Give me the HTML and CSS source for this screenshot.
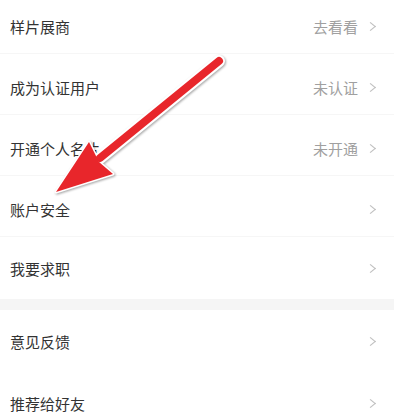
FILE: index.html
```html
<!DOCTYPE html>
<html lang="zh">
<head>
<meta charset="utf-8">
<link rel="stylesheet" href="styles.css">
</head>
<body>
<div class="page">
  <div class="group first">
    <div class="row"><span class="label">样片展商</span><span class="value">去看看</span><span class="chev"></span></div>
    <div class="row"><span class="label">成为认证用户</span><span class="value">未认证</span><span class="chev"></span></div>
    <div class="row"><span class="label">开通个人名片</span><span class="value">未开通</span><span class="chev"></span></div>
    <div class="row"><span class="label">账户安全</span><span class="value"></span><span class="chev"></span></div>
    <div class="row last"><span class="label">我要求职</span><span class="value"></span><span class="chev"></span></div>
  </div>
  <div class="gap"></div>
  <div class="group">
    <div class="row last"><span class="label">意见反馈</span><span class="value"></span><span class="chev"></span></div>
    <div class="row last"><span class="label">推荐给好友</span><span class="value"></span><span class="chev"></span></div>
  </div>
  <svg class="arrow" width="394" height="420" viewBox="0 0 394 420">
    <line x1="219" y1="61" x2="100" y2="158" stroke="#ffffff" stroke-width="12" stroke-linecap="round"/>
    <polygon points="56,192 89,142 99,162 113,174" fill="#ffffff" stroke="#ffffff" stroke-width="3" stroke-linejoin="round"/>
    <line x1="219" y1="61" x2="100" y2="158" stroke="#e8262b" stroke-width="8" stroke-linecap="round"/>
    <polygon points="56,192 89,142 99,162 113,174" fill="#e8262b"/>
  </svg>
</div>
</body>
</html>
```

FILE: styles.css
```css
html, body {
  margin: 0;
  padding: 0;
  background: #ffffff;
}
.page {
  position: relative;
  width: 394px;
  height: 420px;
  overflow: hidden;
  font-family: "Noto Sans CJK SC", "Noto Sans", sans-serif;
}
.group.first {
  margin-top: -7px;
}
.row {
  display: flex;
  align-items: center;
  box-sizing: border-box;
  height: 61px;
  padding: 6px 18px 0 10px;
  border-bottom: 1px solid #f6f6f6;
}
.row.last {
  border-bottom: none;
  height: 62px;
  padding-top: 0;
}
.label {
  flex: 1;
  font-size: 15px;
  color: #333333;
}
.value {
  font-size: 15px;
  color: #a0a0a0;
  margin-right: 9px;
}
.chev {
  width: 6px;
  height: 6px;
  border-top: 1px solid #c0c0c0;
  border-right: 1px solid #c0c0c0;
  transform: rotate(45deg) skew(-6deg, -6deg);
  margin-right: 2px;
}
.gap {
  height: 11px;
  background: #f5f5f5;
}
.arrow {
  position: absolute;
  left: 0;
  top: 0;
  filter: drop-shadow(1px 1px 1px rgba(0,0,0,0.35));
}
```
